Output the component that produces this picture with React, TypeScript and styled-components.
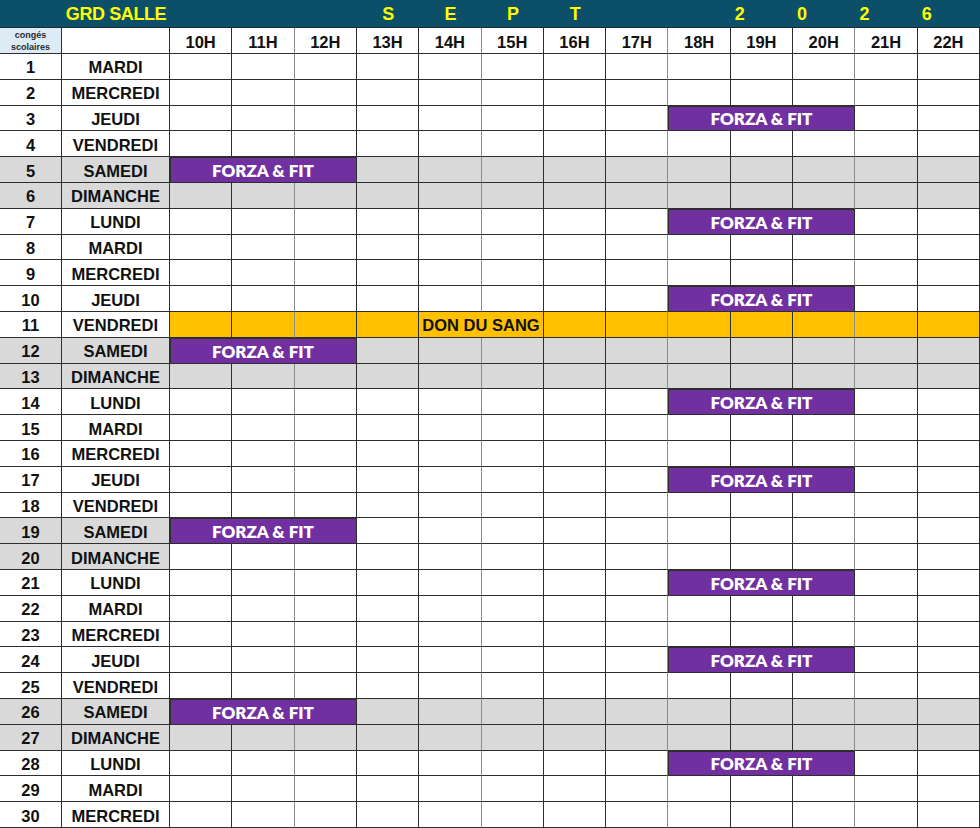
import React from "react";
import styled, { createGlobalStyle } from "styled-components";

const GlobalStyle = createGlobalStyle`
  html, body { margin: 0; padding: 0; background: #ffffff; }
  body { font-family: "Liberation Sans", Arial, sans-serif; }
`;

const LINE = "#2e2e2e";
const SOFT = "#8c8c8c";

const Sheet = styled.div`
  display: grid;
  width: 980px;
  grid-template-columns: 62px 108px repeat(13, 1fr);
  grid-template-rows: 28px 26px repeat(30, 25.8px);
  overflow: hidden;
`;

const TitleCell = styled.div<{ $align?: "center" | "left" }>`
  background: #0c4f68;
  color: #ffff00;
  font-weight: 700;
  font-size: 18px;
  letter-spacing: -0.4px;
  display: flex;
  align-items: center;
  justify-content: ${(p) => (p.$align === "left" ? "flex-start" : "center")};
  padding-left: ${(p) => (p.$align === "left" ? "4px" : "0")};
  padding-top: 2px;
  border-bottom: 1px solid #1d2b33;
  white-space: nowrap;
`;

const CongesCell = styled.div`
  background: #ddebf7;
  color: #2a2a2a;
  font-size: 9px;
  font-weight: 700;
  line-height: 12px;
  display: flex;
  flex-direction: column;
  align-items: center;
  justify-content: center;
  border-right: 1px solid ${LINE};
  border-bottom: 1px solid ${LINE};
`;

const Cell = styled.div<{ $bg?: string; $soft?: boolean }>`
  background: ${(p) => p.$bg || "#ffffff"};
  border-right: 1px solid ${(p) => (p.$soft ? SOFT : LINE)};
  border-bottom: 1px solid ${LINE};
  display: flex;
  align-items: center;
  justify-content: center;
  padding-top: 3px;
  font-size: 16.5px;
  font-weight: 700;
  color: #111111;
  white-space: nowrap;
  min-width: 0;
`;

const EventCell = styled.div<{ $kind: "forza" | "don"; $span: number }>`
  grid-column: span ${(p) => p.$span};
  background: ${(p) => (p.$kind === "forza" ? "#7030a0" : "#ffc000")};
  color: ${(p) => (p.$kind === "forza" ? "#ffffff" : "#111111")};
  border-right: 1px solid ${LINE};
  border-bottom: 1px solid ${LINE};
  box-shadow: ${(p) => (p.$kind === "forza" ? `inset 1px 1px 0 ${LINE}` : "none")};
  display: flex;
  align-items: center;
  justify-content: center;
  padding-top: 2px;
  font-family: ${(p) =>
    p.$kind === "forza" ? `"Lato", "Open Sans", sans-serif` : `"Liberation Sans", Arial, sans-serif`};
  font-size: ${(p) => (p.$kind === "forza" ? "17px" : "16.5px")};
  font-weight: ${(p) => (p.$kind === "forza" ? 800 : 700)};
  white-space: nowrap;
`;

const HOURS = ["10H", "11H", "12H", "13H", "14H", "15H", "16H", "17H", "18H", "19H", "20H", "21H", "22H"];
const SOFT_COLS = new Set([1, 4, 7, 10]);

const TITLE: { text: string; align?: "center" | "left" }[] = [
  { text: "" }, { text: "" }, { text: "" },
  { text: "S" }, { text: "E" }, { text: "P" }, { text: "T" },
  { text: "" }, { text: "" },
  { text: "2", align: "left" }, { text: "0", align: "left" }, { text: "2", align: "left" }, { text: "6", align: "left" },
];

type Ev = { start: number; span: number; label: string; kind: "forza" | "don" };
type Day = { n: number; name: string; labelGray?: boolean; rowGray?: boolean; rowBg?: string; events: Ev[] };

const AM: Ev = { start: 0, span: 3, label: "FORZA & FIT", kind: "forza" };
const PM: Ev = { start: 8, span: 3, label: "FORZA & FIT", kind: "forza" };
const DON: Ev = { start: 4, span: 2, label: "DON DU SANG", kind: "don" };

const DAYS: Day[] = [
  { n: 1, name: "MARDI", events: [] },
  { n: 2, name: "MERCREDI", events: [] },
  { n: 3, name: "JEUDI", events: [PM] },
  { n: 4, name: "VENDREDI", events: [] },
  { n: 5, name: "SAMEDI", labelGray: true, rowGray: true, events: [AM] },
  { n: 6, name: "DIMANCHE", labelGray: true, rowGray: true, events: [] },
  { n: 7, name: "LUNDI", events: [PM] },
  { n: 8, name: "MARDI", events: [] },
  { n: 9, name: "MERCREDI", events: [] },
  { n: 10, name: "JEUDI", events: [PM] },
  { n: 11, name: "VENDREDI", rowBg: "#ffc000", events: [DON] },
  { n: 12, name: "SAMEDI", labelGray: true, rowGray: true, events: [AM] },
  { n: 13, name: "DIMANCHE", labelGray: true, rowGray: true, events: [] },
  { n: 14, name: "LUNDI", events: [PM] },
  { n: 15, name: "MARDI", events: [] },
  { n: 16, name: "MERCREDI", events: [] },
  { n: 17, name: "JEUDI", events: [PM] },
  { n: 18, name: "VENDREDI", events: [] },
  { n: 19, name: "SAMEDI", labelGray: true, events: [AM] },
  { n: 20, name: "DIMANCHE", labelGray: true, events: [] },
  { n: 21, name: "LUNDI", events: [PM] },
  { n: 22, name: "MARDI", events: [] },
  { n: 23, name: "MERCREDI", events: [] },
  { n: 24, name: "JEUDI", events: [PM] },
  { n: 25, name: "VENDREDI", events: [] },
  { n: 26, name: "SAMEDI", labelGray: true, rowGray: true, events: [AM] },
  { n: 27, name: "DIMANCHE", labelGray: true, rowGray: true, events: [] },
  { n: 28, name: "LUNDI", events: [PM] },
  { n: 29, name: "MARDI", events: [] },
  { n: 30, name: "MERCREDI", events: [] },
];

const GRAY = "#d9d9d9";

function DayRow({ day }: { day: Day }) {
  const slotBg = day.rowBg || (day.rowGray ? GRAY : "#ffffff");
  const cells: React.ReactNode[] = [];
  let i = 0;
  while (i < HOURS.length) {
    const ev = day.events.find((e) => e.start === i);
    if (ev) {
      cells.push(
        <EventCell key={i} $kind={ev.kind} $span={ev.span}>
          {ev.label}
        </EventCell>
      );
      i += ev.span;
    } else {
      cells.push(<Cell key={i} $bg={slotBg} $soft={SOFT_COLS.has(i)} />);
      i += 1;
    }
  }
  const labelBg = day.labelGray ? GRAY : "#ffffff";
  return (
    <>
      <Cell $bg={labelBg}>{day.n}</Cell>
      <Cell $bg={labelBg}>{day.name}</Cell>
      {cells}
    </>
  );
}

export default function App() {
  return (
    <>
      <GlobalStyle />
      <Sheet>
        <TitleCell />
        <TitleCell>GRD SALLE</TitleCell>
        {TITLE.map((t, i) => (
          <TitleCell key={`t${i}`} $align={t.align}>
            {t.text}
          </TitleCell>
        ))}

        <CongesCell>
          <span>congés</span>
          <span>scolaires</span>
        </CongesCell>
        <Cell />
        {HOURS.map((h, i) => (
          <Cell key={h} $soft={SOFT_COLS.has(i)}>
            {h}
          </Cell>
        ))}

        {DAYS.map((d) => (
          <DayRow key={d.n} day={d} />
        ))}
      </Sheet>
    </>
  );
}
